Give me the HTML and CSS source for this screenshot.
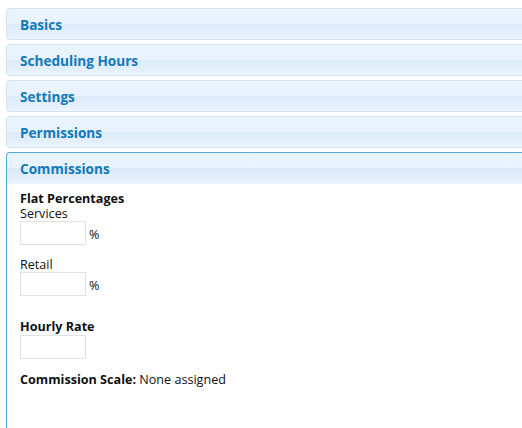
FILE: index.html
```html
<!DOCTYPE html>
<html lang="en">
<head>
	<meta charset="UTF-8">
	<title>Staff</title>
	<link rel="stylesheet" href="styles.css">
</head>
<body>
<div class="accordion">
	<h3 class="acc-header">Basics</h3>
	<h3 class="acc-header">Scheduling Hours</h3>
	<h3 class="acc-header">Settings</h3>
	<h3 class="acc-header">Permissions</h3>
	<h3 class="acc-header active">Commissions</h3>
	<div class="acc-content">
		<div class="group-title">Flat Percentages</div>
		<div class="field">
			<label>Services</label>
			<div class="input-row"><input type="text" class="small-input"><span class="unit">%</span></div>
		</div>
		<div class="field">
			<label>Retail</label>
			<div class="input-row"><input type="text" class="small-input"><span class="unit">%</span></div>
		</div>
		<div class="group-title hourly">Hourly Rate</div>
		<div class="input-row"><input type="text" class="small-input"></div>
		<p class="scale"><b>Commission Scale:</b> None assigned</p>
	</div>
</div>
</body>
</html>
```

FILE: styles.css
```css
*{
	margin: 0;
	padding: 0;
	box-sizing: border-box;
}
body{
	padding: 8px 0 0 6px;
	overflow: hidden;
	background: #fff;
	font-family: "Open Sans", "Liberation Sans", sans-serif;
	font-size: 12.6px;
	color: #111;
}
.accordion{
	width: 540px;
}
.acc-header{
	height: 32px;
	margin-bottom: 4px;
	padding: 1px 13px 0;
	border: 1px solid #d3e3f1;
	border-radius: 4px;
	background: linear-gradient(#eaf4fd 0, #e9f3fd 48%, #dcebf9 50%, #e4f0fb 85%, #edf5fd 100%);
	font-size: 13.6px;
	font-weight: bold;
	line-height: 29px;
	color: #1479b8;
}
.acc-header.active{
	margin-bottom: 0;
	border-color: #52a9dc;
	border-bottom: none;
	border-radius: 4px 4px 0 0;
}
.acc-content{
	height: 260px;
	padding: 7px 13px 0;
	border-left: 1px solid #52a9dc;
}
.group-title{
	font-weight: bold;
	line-height: 16px;
}
.field label{
	display: block;
	line-height: 14px;
}
.input-row{
	display: flex;
	align-items: center;
	gap: 3px;
	height: 24px;
}
.field{
	margin-bottom: 13px;
}
.small-input{
	width: 66px;
	height: 24px;
	border: 1px solid #e2e2e2;
	background: #fff;
	outline: none;
}
.unit{
	padding-top: 2px;
}
.hourly{
	margin-top: 23px;
}
.scale{
	margin-top: 12px;
	line-height: 18px;
}
```
